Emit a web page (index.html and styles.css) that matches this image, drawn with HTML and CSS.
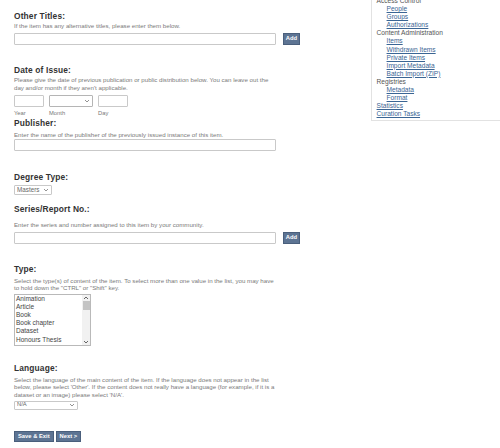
FILE: index.html
```html
<!DOCTYPE html>
<html lang="en">
<head>
    <meta charset="UTF-8">
    <meta name="viewport" content="width=device-width, initial-scale=1.0">
    <title>Describe Item</title>
    <link rel="stylesheet" href="styles.css">
</head>
<body>
<div class="page">
    <div class="main">
        <div class="field first">
            <h2>Other Titles:</h2>
            <p class="help">If the item has any alternative titles, please enter them below.</p>
            <div class="row">
                <input type="text" class="wide">
                <button class="btn add">Add</button>
            </div>
        </div>

        <div class="field date">
            <h2>Date of Issue:</h2>
            <p class="help two">Please give the date of previous publication or public distribution below. You can leave out the day and/or month if they aren't applicable.</p>
            <div class="row date-row">
                <div class="part"><input type="text" class="year"><span>Year</span></div>
                <div class="part">
                    <span class="select month">
                        <select><option></option></select>
                        <svg class="chev" width="6" height="4" viewBox="0 0 6 4"><path d="M1 1 L3 3 L5 1" fill="none" stroke="#777" stroke-width="0.8"/></svg>
                    </span>
                    <span>Month</span>
                </div>
                <div class="part"><input type="text" class="day"><span>Day</span></div>
            </div>
        </div>

        <div class="field publisher">
            <h2>Publisher:</h2>
            <p class="help">Enter the name of the publisher of the previously issued instance of this item.</p>
            <div class="row">
                <input type="text" class="wide">
            </div>
        </div>

        <div class="field degree">
            <h2>Degree Type:</h2>
            <div class="row">
                <span class="select small">
                    <select><option>Masters</option></select>
                    <svg class="chev" width="6" height="4" viewBox="0 0 6 4"><path d="M1 1 L3 3 L5 1" fill="none" stroke="#777" stroke-width="0.8"/></svg>
                </span>
            </div>
        </div>

        <div class="field series">
            <h2>Series/Report No.:</h2>
            <p class="help">Enter the series and number assigned to this item by your community.</p>
            <div class="row">
                <input type="text" class="wide">
                <button class="btn add">Add</button>
            </div>
        </div>

        <div class="field type">
            <h2>Type:</h2>
            <p class="help two">Select the type(s) of content of the item. To select more than one value in the list, you may have to hold down the "CTRL" or "Shift" key.</p>
            <div class="listbox">
                <ul class="options">
                    <li>Animation</li>
                    <li>Article</li>
                    <li>Book</li>
                    <li>Book chapter</li>
                    <li>Dataset</li>
                    <li>Honours Thesis</li>
                </ul>
                <div class="scrollbar">
                    <svg width="8" height="6" viewBox="0 0 8 6"><path d="M2 4 L4 2 L6 4" fill="none" stroke="#555" stroke-width="0.9"/></svg>
                    <div class="thumb"></div>
                    <div class="track"></div>
                    <svg width="8" height="6" viewBox="0 0 8 6"><path d="M2 2 L4 4 L6 2" fill="none" stroke="#555" stroke-width="0.9"/></svg>
                </div>
            </div>
        </div>

        <div class="field language">
            <h2>Language:</h2>
            <p class="help three">Select the language of the main content of the item. If the language does not appear in the list below, please select 'Other'. If the content does not really have a language (for example, if it is a dataset or an image) please select 'N/A'.</p>
            <div class="row">
                <span class="select lang">
                    <select><option>N/A</option></select>
                    <svg class="chev" width="6" height="4" viewBox="0 0 6 4"><path d="M1 1 L3 3 L5 1" fill="none" stroke="#777" stroke-width="0.8"/></svg>
                </span>
            </div>
        </div>

        <div class="actions">
            <button class="btn">Save &amp; Exit</button>
            <button class="btn">Next &gt;</button>
        </div>
    </div>

    <div class="sidebar">
        <ul class="menu">
            <li>Access Control
                <ul>
                    <li><a href="#">People</a></li>
                    <li><a href="#">Groups</a></li>
                    <li><a href="#">Authorizations</a></li>
                </ul>
            </li>
            <li>Content Administration
                <ul>
                    <li><a href="#">Items</a></li>
                    <li><a href="#">Withdrawn Items</a></li>
                    <li><a href="#">Private Items</a></li>
                    <li><a href="#">Import Metadata</a></li>
                    <li><a href="#">Batch Import (ZIP)</a></li>
                </ul>
            </li>
            <li>Registries
                <ul>
                    <li><a href="#">Metadata</a></li>
                    <li><a href="#">Format</a></li>
                </ul>
            </li>
            <li><a href="#">Statistics</a></li>
            <li><a href="#">Curation Tasks</a></li>
        </ul>
    </div>
</div>
</body>
</html>
```

FILE: styles.css
```css
body {
    margin: 0;
    font-family: "Liberation Sans", Arial, sans-serif;
    color: #333;
    background-color: #fff;
    overflow: hidden;
}
.page {
    display: flex;
    align-items: flex-start;
}
.main {
    width: 361px;
    padding-left: 14px;
    padding-top: 11px;
}
.field h2 {
    margin: 0;
    font-size: 8.4px;
    line-height: 10px;
    font-weight: bold;
    letter-spacing: 0.15px;
    color: #333;
}
.help {
    margin: 1px 0 0;
    width: 263px;
    font-size: 6.15px;
    line-height: 7.5px;
    color: #7a7a7a;
}
.row {
    display: flex;
    align-items: flex-start;
    margin-top: 3px;
}
input, select {
    box-sizing: border-box;
    margin: 0;
    border: 1px solid #c9c9c9;
    border-radius: 1px;
    background: #fff;
    font-family: inherit;
}
input.wide {
    width: 262px;
    height: 12px;
}

/* dropdowns */
.select {
    position: relative;
    display: block;
}
.select select {
    display: block;
    width: 100%;
    height: 100%;
    appearance: none;
    -webkit-appearance: none;
    padding: 0 0 0 2px;
    font-size: 6.3px;
    color: #666;
    line-height: 1;
}
.select .chev {
    position: absolute;
    right: 3px;
    top: 50%;
    margin-top: -2px;
}

.btn {
    margin: 0;
    padding: 0 3px;
    height: 11px;
    border: 1px solid #4a5f7c;
    background-color: #5d7493;
    color: #fff;
    font-family: inherit;
    font-size: 5.8px;
    font-weight: bold;
    line-height: 9px;
    cursor: pointer;
}
.btn.add {
    margin-left: 7px;
    width: 17px;
    height: 12px;
    padding: 0;
}

/* field spacing */
.date { margin-top: 20px; }
.date .help { line-height: 8px; }
.date .row { margin-top: 3px; }
.date-row { gap: 5px; }
.part {
    display: flex;
    flex-direction: column;
}
.part > span:last-child {
    margin-top: 2px;
    font-size: 5.8px;
    line-height: 8px;
    color: #777;
}
.year, .day {
    width: 30px;
    height: 12px;
}
.select.month {
    width: 44px;
    height: 12px;
}
.month select {
    border-color: #b5b5b5;
}
.publisher { margin-top: 1px; }
.publisher .help { margin-top: 3px; }
.publisher .row { margin-top: 1px; }
.degree { margin-top: 21px; }
.degree .row { margin-top: 3px; }
.select.small {
    width: 38px;
    height: 10px;
}
.series { margin-top: 9px; }
.series .help { margin-top: 7px; }
.series .row { margin-top: 3px; }
.type { margin-top: 20px; }
.type .help { margin-top: 3px; }
.language { margin-top: 17px; }
.language .help { margin-top: 3px; line-height: 7.7px; width: 261px; }
.language .row { margin-top: 2px; }
.select.lang {
    width: 64px;
    height: 9px;
}
.lang select {
    font-size: 5.8px;
}

/* multi select list */
.listbox {
    display: flex;
    width: 77px;
    height: 52px;
    margin-top: 2px;
    border: 1px solid #b9b9b9;
    box-sizing: border-box;
    overflow: hidden;
}
.options {
    flex: 1;
    margin: 0;
    padding: 0 0 0 1px;
    list-style: none;
    font-size: 6.5px;
    line-height: 8.2px;
    color: #444;
}
.scrollbar {
    width: 8px;
    display: flex;
    flex-direction: column;
    background-color: #f1f1f1;
}
.scrollbar svg {
    display: block;
}
.thumb {
    height: 9px;
    margin: 0 0.5px;
    background-color: #c4c4c4;
}
.track {
    flex: 1;
}

.actions {
    display: flex;
    gap: 2px;
    margin-top: 21px;
}

/* sidebar */
.sidebar {
    width: 125px;
    margin-top: -3px;
    border-left: 1px solid #e2e2e2;
    border-bottom: 1px solid #e2e2e2;
    padding: 0 0 2px 5px;
}
.menu, .menu ul {
    margin: 0;
    padding: 0;
    list-style: none;
}
.menu {
    font-size: 6.6px;
    line-height: 8.1px;
    color: #555;
}
.menu ul {
    padding-left: 10px;
}
.menu a {
    color: #3a6594;
}
```
